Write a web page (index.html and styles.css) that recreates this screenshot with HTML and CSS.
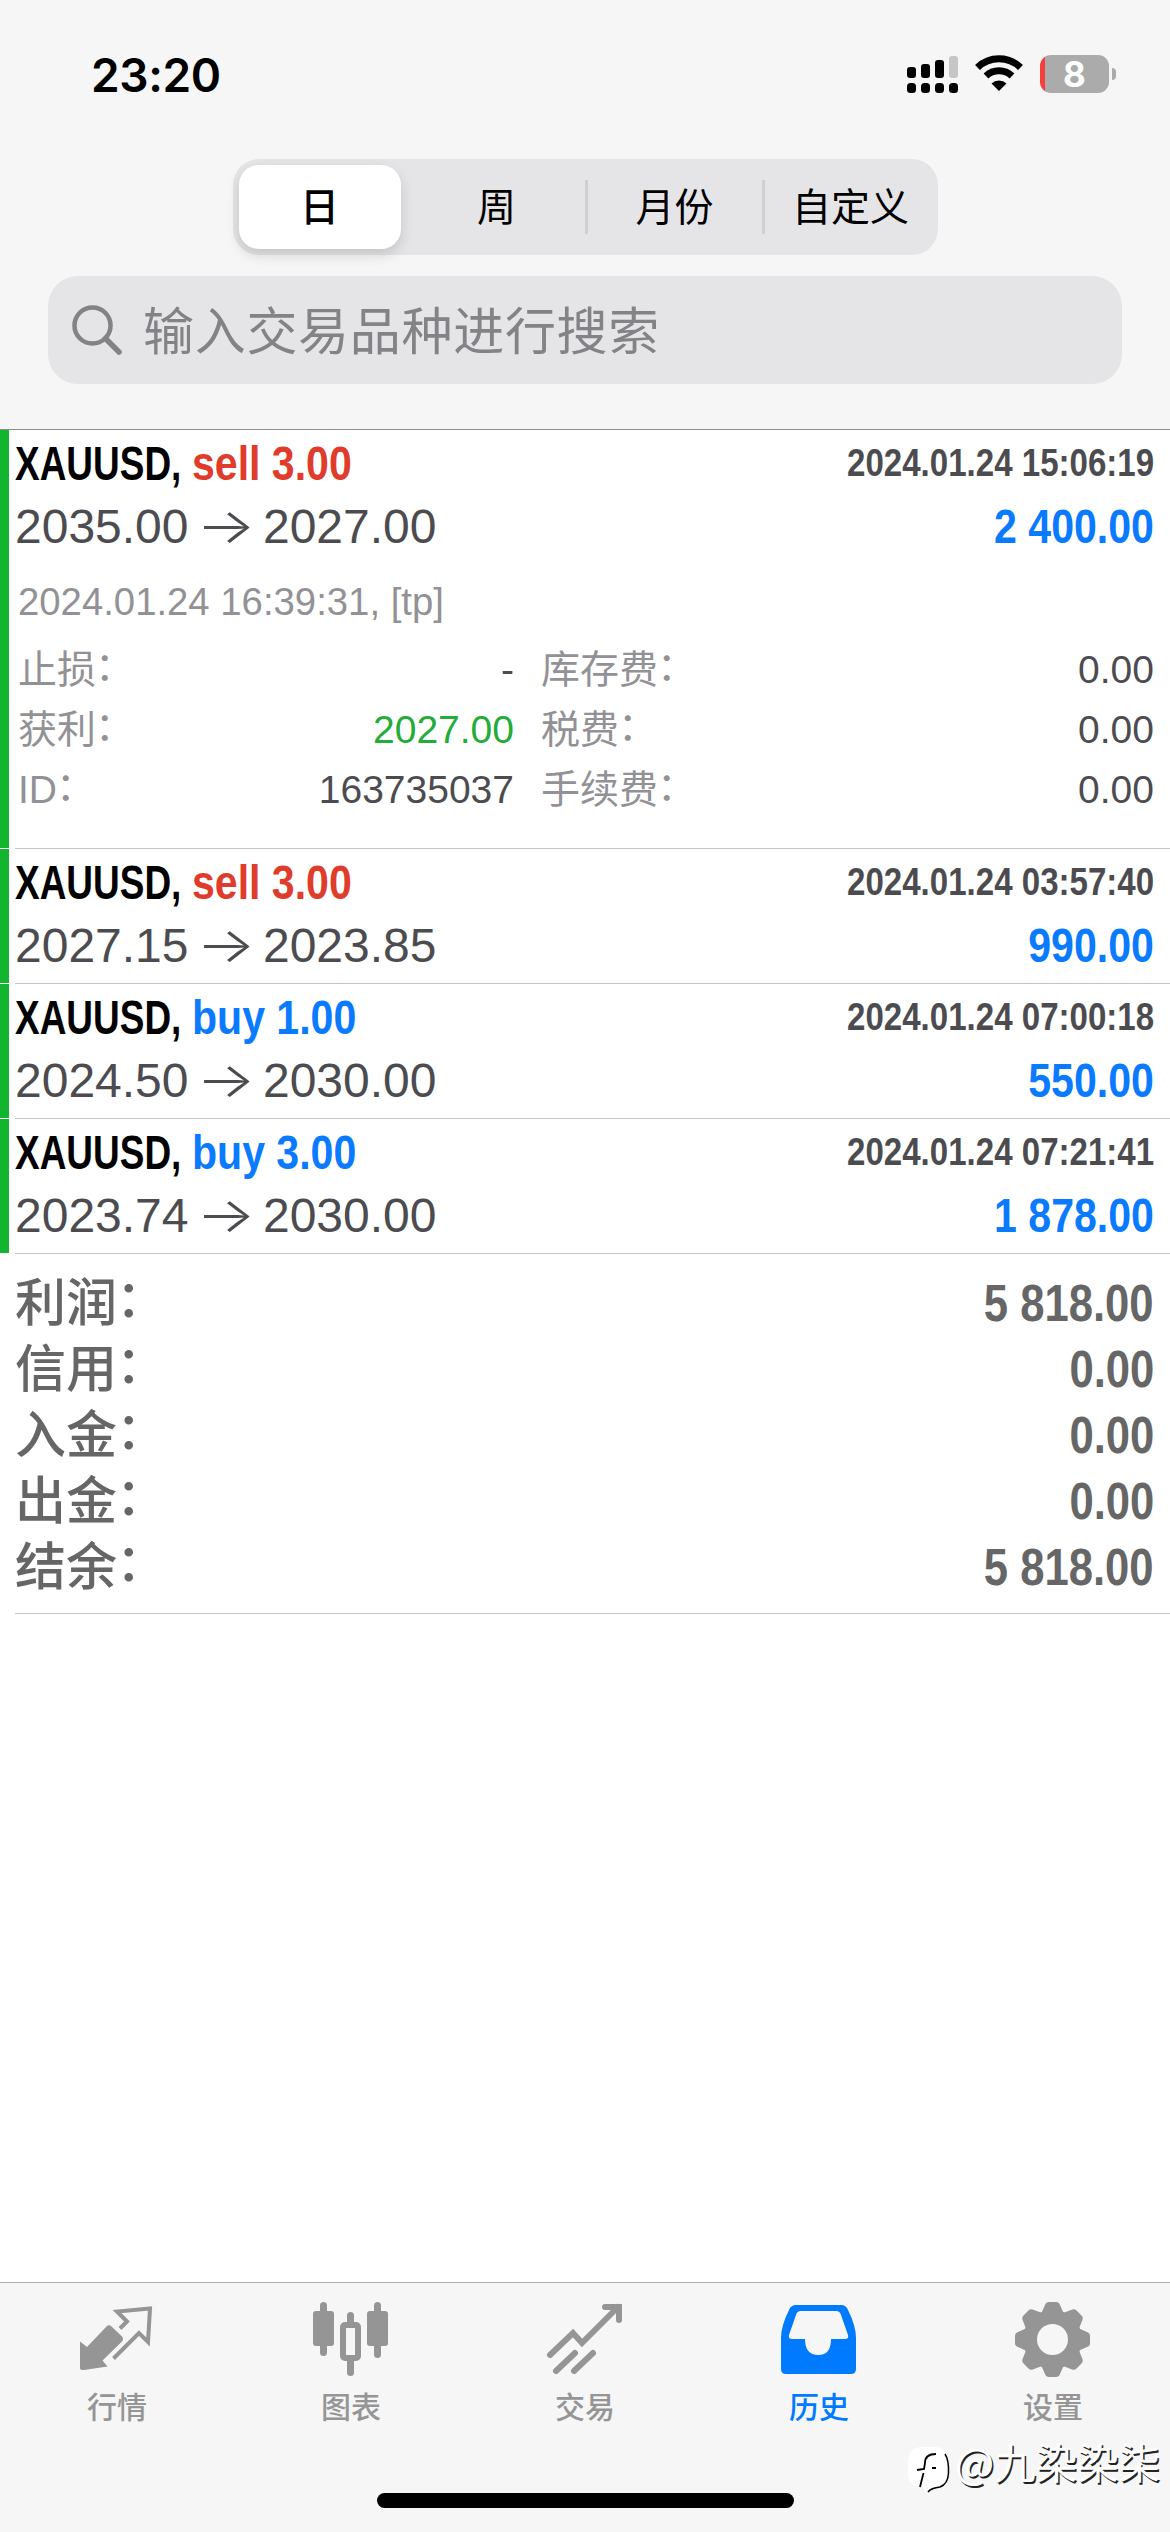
FILE: index.html
```html
<!DOCTYPE html>
<html lang="zh-CN">
<head>
<meta charset="utf-8">
<title>历史</title>
<link rel="stylesheet" href="styles.css">
</head>
<body>
<div class="screen">
  <header class="top">
    <div class="status">
      <span class="clock">23:20</span>
      <div class="status-icons">
        <svg class="signal" width="52" height="38" viewBox="0 0 52 38">
          <rect x="0" y="12" width="9" height="11" rx="3"/><rect x="14" y="9" width="9" height="14" rx="3"/><rect x="28" y="5" width="9" height="18" rx="3"/><rect x="42" y="1" width="9" height="22" rx="3" fill="#c6c6c6"/>
          <rect x="0" y="28" width="9" height="10" rx="3.5"/><rect x="14" y="28" width="9" height="10" rx="3.5"/><rect x="28" y="28" width="9" height="10" rx="3.5"/><rect x="42" y="28" width="9" height="10" rx="3.5"/>
        </svg>
        <svg class="wifi" width="50" height="36" viewBox="0 0 50 36">
          <path d="M3.5 12.5A31 31 0 0 1 46.500 12.500M12 21A19 19 0 0 1 38 21" fill="none" stroke="#000" stroke-width="7"/>
          <path d="M25 36L17.500 28.500A11 11 0 0 1 32.500 28.500Z"/>
        </svg>
        <div class="battery"><span class="battery-body">8</span><span class="battery-cap"></span></div>
      </div>
    </div>
    <nav class="segments">
      <span class="segment segment-on">日</span><span class="segment segment-next">周</span><span class="segment segment-line">月份</span><span class="segment segment-line segment-last">自定义</span>
    </nav>
    <div class="search">
      <svg width="50" height="50" viewBox="0 0 50 50"><circle cx="20.500" cy="20.500" r="18" fill="none" stroke="#838387" stroke-width="4.500"/><path d="M33.500 33.500L47 47" stroke="#838387" stroke-width="5.500" stroke-linecap="round"/></svg>
      <span>输入交易品种进行搜索</span>
    </div>
  </header>

  <main class="history">
    <section class="deal deal-open">
      <div class="deal-body">
        <div class="line head"><span class="title"><span class="symbol">XAUUSD,</span> <b class="side sell">sell 3.00</b></span><span class="narrow date">2024.01.24 15:06:19</span></div>
        <div class="line prices"><span class="price">2035.00 <i class="arrow">→</i> 2027.00</span><span class="narrow amount">2 400.00</span></div>
        <div class="closed">2024.01.24 16:39:31, [tp]</div>
        <div class="details">
          <span class="label">止损<i class="colon">：</i></span><span class="value">-</span><span class="label">库存费<i class="colon">：</i></span><span class="value">0.00</span>
          <span class="label">获利<i class="colon">：</i></span><span class="value green">2027.00</span><span class="label">税费<i class="colon">：</i></span><span class="value">0.00</span>
          <span class="label">ID<i class="colon">：</i></span><span class="value">163735037</span><span class="label">手续费<i class="colon">：</i></span><span class="value">0.00</span>
        </div>
      </div>
    </section>
    <section class="deal">
      <div class="deal-body">
        <div class="line head"><span class="title"><span class="symbol">XAUUSD,</span> <b class="side sell">sell 3.00</b></span><span class="narrow date">2024.01.24 03:57:40</span></div>
        <div class="line prices"><span class="price">2027.15 <i class="arrow">→</i> 2023.85</span><span class="narrow amount">990.00</span></div>
      </div>
    </section>
    <section class="deal">
      <div class="deal-body">
        <div class="line head"><span class="title"><span class="symbol">XAUUSD,</span> <b class="side buy">buy 1.00</b></span><span class="narrow date">2024.01.24 07:00:18</span></div>
        <div class="line prices"><span class="price">2024.50 <i class="arrow">→</i> 2030.00</span><span class="narrow amount">550.00</span></div>
      </div>
    </section>
    <section class="deal">
      <div class="deal-body">
        <div class="line head"><span class="title"><span class="symbol">XAUUSD,</span> <b class="side buy">buy 3.00</b></span><span class="narrow date">2024.01.24 07:21:41</span></div>
        <div class="line prices"><span class="price">2023.74 <i class="arrow">→</i> 2030.00</span><span class="narrow amount">1 878.00</span></div>
      </div>
    </section>
    <section class="totals">
      <div class="total"><span>利润<i class="colon">：</i></span><span class="narrow sum">5 818.00</span></div>
      <div class="total"><span>信用<i class="colon">：</i></span><span class="narrow sum">0.00</span></div>
      <div class="total"><span>入金<i class="colon">：</i></span><span class="narrow sum">0.00</span></div>
      <div class="total"><span>出金<i class="colon">：</i></span><span class="narrow sum">0.00</span></div>
      <div class="total"><span>结余<i class="colon">：</i></span><span class="narrow sum">5 818.00</span></div>
    </section>
  </main>

  <footer class="tabs">
    <div class="tab">
      <svg width="90" height="80" viewBox="0 0 90 80"><path fill="currentColor" d="M8 39.500L15 45L34.500 24.500Q37 22 39.500 24.500L50 34.500Q52 37 50 39.500L30.500 58.500L35.500 64.500L12 68Q8 68.500 8 66Z"/><path fill="none" stroke="currentColor" stroke-width="4" d="M48 26.500L55 19.500L45 9.500L78 6.500L76 40L67 31L41.500 56.500"/></svg>
      <span>行情</span>
    </div>
    <div class="tab">
      <svg width="90" height="80" viewBox="0 0 90 80" fill="currentColor"><rect x="14" y="0" width="7" height="54" rx="3.500"/><rect x="7" y="9" width="21" height="35" rx="3"/><rect x="68" y="0" width="7" height="56" rx="3.500"/><rect x="61" y="9" width="21" height="35" rx="3"/><rect x="41" y="10" width="7" height="15" rx="3.500"/><rect x="41" y="55" width="7" height="19" rx="3.500"/><rect x="37" y="23" width="15" height="33" rx="2" fill="none" stroke="currentColor" stroke-width="6"/></svg>
      <span>图表</span>
    </div>
    <div class="tab">
      <svg width="90" height="80" viewBox="0 0 90 80"><path fill="none" stroke="currentColor" stroke-width="6" stroke-linecap="round" d="M10 53L33 31L42 41L78 5M65 5H79V18M16 69L35 51M34 69L53 51"/></svg>
      <span>交易</span>
    </div>
    <div class="tab tab-on">
      <svg width="90" height="80" viewBox="0 0 90 80"><path fill="currentColor" fill-rule="evenodd" d="M22 3H67Q72 3 74 8Q82 24 82 36V67Q82 72 77 72H12Q7 72 7 67V36Q7 24 15 8Q17 3 22 3ZM27 9Q23 9 22 13L15 33Q14 37 18 37H31Q31 53 44.500 53Q57 53 57 37H71Q75 37 74 33L67 13Q66 9 62 9Z"/></svg>
      <span>历史</span>
    </div>
    <div class="tab">
      <svg width="90" height="80" viewBox="0 0 90 80"><g fill="currentColor"><g id="teeth"><path id="tooth" d="M33 12L37 3Q38 0 41 0H48Q51 0 52 3L56 12V63L52 72Q51 75 48 75H41Q38 75 37 72L33 63Z"/><use href="#tooth" transform="rotate(90 44.500 37.500)"/></g><use href="#teeth" transform="rotate(45 44.500 37.500)"/><circle cx="44.500" cy="37.500" r="29.500"/></g><circle cx="44.500" cy="37.500" r="15.500" fill="#f6f6f6"/></svg>
      <span>设置</span>
    </div>
  </footer>
  <div class="home"></div>
  <div class="watermark">
    <svg width="44" height="50" viewBox="0 0 44 50"><path fill="#fff" d="M13 0H28Q39 1 40 14V27Q40 38 30 40Q23 41 19 45L15 40Q0 40 0 27V14Q1 1 13 0Z"/><path fill="none" stroke="#000" stroke-width="1.800" d="M28 7Q17 7 17 16L16 22L9 23M15.500 26L12 40M24 21H28"/><path fill="none" stroke="#000" stroke-width="1.500" d="M37 7Q41 13 40.500 26Q40 37 32 40Q23 41 20 45"/></svg>
    <span>@九染染柒</span>
  </div>
</div>
</body>
</html>
```
FILE: styles.css
```css
* { box-sizing: border-box; }
body { margin: 0; background: #fff; }
i { font-style: normal; }
.screen { position: relative; display: flex; flex-direction: column; width: 1170px; height: 2532px; overflow: hidden; background: #fff; color: #4c4c50; font-family: "Liberation Sans", "Noto Sans CJK SC", sans-serif; }
.top { height: 430px; background: #f6f6f6; border-bottom: 1px solid #8e8e92; display: flex; flex-direction: column; align-items: center; }
.status { width: 100%; height: 159px; padding: 46px 54px 0 91px; display: flex; justify-content: space-between; align-items: flex-start; color: #000; }
.clock { font: 600 46px/58px Inter, sans-serif; letter-spacing: -.4px; }
.status-icons { display: flex; align-items: flex-start; padding-top: 9px; }
.signal { margin-right: 15px; }
.wifi { margin-right: 16px; }
.battery { display: flex; align-items: center; gap: 3px; }
.battery-body { width: 69px; height: 38px; border-radius: 11px; background: linear-gradient(to right, #f2403a 5px, #ababab 5px); color: #fff; font: 700 35px/38px Inter, sans-serif; text-align: center; }
.battery-cap { width: 4px; height: 12px; border-radius: 0 4px 4px 0; background: #ababab; }
.segments { display: grid; grid-template-columns: 162px 184px 177px 170px; width: 705px; height: 96px; padding: 6px; border-radius: 26px; background: #e5e5e8; color: #000; font: 400 39px/84px "Noto Sans CJK SC", sans-serif; }
.segment { position: relative; text-align: center; height: 84px; line-height: 78px; }
.segment-on { background: #fff; border-radius: 20px; font-weight: 500; box-shadow: 0 6px 14px rgba(0,0,0,.14); }
.segment-next { padding-left: 8px; }
.segment-line { padding-left: 3px; }
.segment-last { padding-left: 8px; white-space: nowrap; }
.segment-line::before { content: ""; position: absolute; left: 0; top: 15px; width: 3px; height: 54px; background: #d0d0d3; }
.search { display: flex; align-items: center; gap: 21px; width: 1074px; height: 108px; margin-top: 21px; padding: 0 24px; border-radius: 30px; background: #e5e5e8; color: #838387; font: 400 51px/104px "Noto Sans CJK SC", sans-serif; letter-spacing: .7px; }
.search span { height: 108px; }
.deal { position: relative; height: 135px; border-left: 9px solid #13b52f; padding-left: 6px; background: #fff; }
.deal-body { height: 100%; border-bottom: 1px solid #c4c4c8; padding: 4px 16px 0 0; }
.deal::after { content: ""; position: absolute; left: -9px; bottom: 0; width: 9px; height: 1px; background: #fff; }
.deal-open { height: 419px; }
.line { display: flex; justify-content: space-between; align-items: baseline; height: 63px; line-height: 60px; font-size: 48px; white-space: nowrap; }
.narrow { font-weight: 700; display: inline-block; transform: scaleX(.855); transform-origin: right; white-space: nowrap; }
.title { display: flex; color: #000; font-weight: 700; }
.symbol { width: 177px; transform: scaleX(.77); transform-origin: left; }
.side { transform: scaleX(.855); transform-origin: left; }
.sell { color: #e03c2c; }
.buy, .amount { color: #0a7aff; }
.date { font-size: 39px; align-self: flex-start; line-height: 58px; transform: scaleX(.848); }
.arrow { display: inline-block; font-family: Inter, sans-serif; font-weight: 300; line-height: 1; transform: scaleX(1.3); margin: 0 1px; }
.closed { margin: 12px 0 0 3px; font-size: 38.300px; line-height: 60px; color: #929296; }
.details { display: grid; grid-template-columns: 262px 234px 270px 1fr; padding-left: 3px; margin-top: 8px; grid-auto-rows: 60px; line-height: 60px; font-size: 39px; }
.label { color: #929296; }
.label:nth-child(4n+3) { padding-left: 27px; }
.value { text-align: right; }
.green { color: #22ac38; }
.colon { vertical-align: .08em; line-height: 1; margin-left: -1px; }
.totals { margin-left: 15px; padding: 17px 16px 0 0; height: 360px; border-bottom: 1px solid #c4c4c8; color: #666; }
.total { display: flex; justify-content: space-between; align-items: baseline; height: 66px; line-height: 66px; font-size: 51px; font-weight: 500; }
.tabs { margin-top: auto; height: 250px; display: grid; grid-template-columns: repeat(5, 1fr); background: #f6f6f6; border-top: 1px solid #adadad; padding-top: 19px; font: 500 30px/40px "Noto Sans CJK SC", sans-serif; color: #959595; }
.tab { display: flex; flex-direction: column; align-items: center; gap: 3px; }
.tab-on { color: #007aff; }
.home { position: absolute; left: 377px; top: 2493px; width: 417px; height: 15px; border-radius: 8px; background: #000; }
.watermark { position: absolute; left: 908px; top: 2447px; display: flex; align-items: flex-start; gap: 3px; color: #fff; font: 400 41.500px/28px "Noto Sans CJK SC", sans-serif; text-shadow: 1.500px 1.500px 0 #222; white-space: nowrap; }
```
